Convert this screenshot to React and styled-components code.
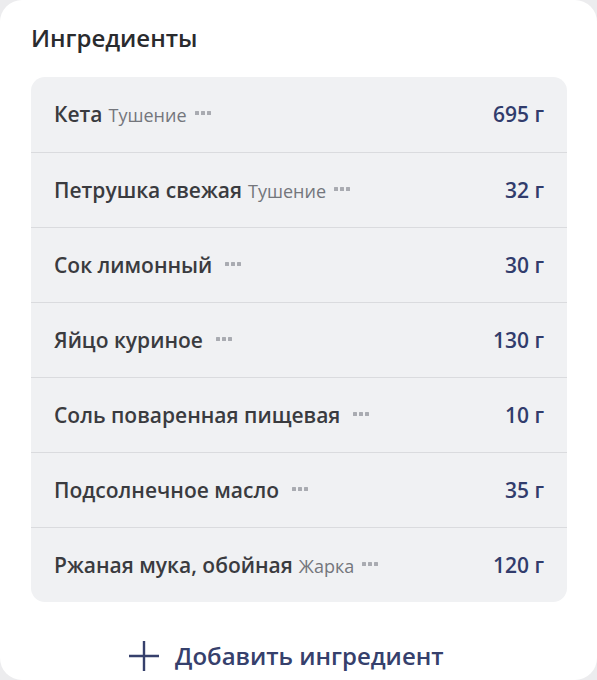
import React from "react";
import styled, { createGlobalStyle } from "styled-components";

const GlobalStyle = createGlobalStyle`
  html, body {
    margin: 0;
    padding: 0;
    background: #ececee;
  }
  body {
    font-family: "Open Sans", "Noto Sans", "Liberation Sans", sans-serif;
  }
`;

const Card = styled.div`
  background: #ffffff;
  border-radius: 22px;
  min-height: 680px;
  box-sizing: border-box;
  padding: 22px 30px 0 31px;
`;

const Title = styled.h2`
  margin: 0 0 23px;
  font-size: 24px;
  font-weight: 600;
  color: #2a2b2e;
  line-height: 32px;
`;

const Panel = styled.div`
  background: #f0f1f3;
  border-radius: 14px;
  overflow: hidden;
`;

const Row = styled.div`
  display: flex;
  align-items: center;
  justify-content: space-between;
  box-sizing: border-box;
  height: 75px;
  padding: 0 23px 1px;
  border-top: ${(p) => (p.$first ? "none" : "1px solid #dadbde")};
`;

const NameWrap = styled.div`
  display: flex;
  align-items: baseline;
  white-space: nowrap;
`;

const Name = styled.span`
  font-size: 21px;
  font-weight: 600;
  color: #3a3b3f;
`;

const Method = styled.span`
  margin-left: 6px;
  font-size: 18px;
  font-weight: 500;
  color: #74767c;
`;

const Dots = styled.span`
  display: inline-flex;
  gap: 2px;
  margin-left: ${(p) => (p.$wide ? "13px" : "8px")};
  align-self: center;
  position: relative;
  top: -1px;

  i {
    width: 4px;
    height: 4px;
    background: #a9abb1;
    border-radius: 0.5px;
  }
`;

const Amount = styled.span`
  font-size: 21px;
  font-weight: 600;
  color: #313c6c;
`;

const AddButton = styled.button`
  display: flex;
  align-items: center;
  gap: 15px;
  margin: 37px 0 0 97px;
  background: none;
  border: none;
  padding: 0;
  font-family: inherit;
  font-size: 24px;
  line-height: 33px;
  font-weight: 600;
  color: #36406c;
  cursor: pointer;
`;

const items = [
  { name: "Кета", method: "Тушение", amount: "695 г" },
  { name: "Петрушка свежая", method: "Тушение", amount: "32 г" },
  { name: "Сок лимонный", amount: "30 г" },
  { name: "Яйцо куриное", amount: "130 г" },
  { name: "Соль поваренная пищевая", amount: "10 г" },
  { name: "Подсолнечное масло", amount: "35 г" },
  { name: "Ржаная мука, обойная", method: "Жарка", amount: "120 г" },
];

const PlusIcon = () => (
  <svg width="32" height="32" viewBox="0 0 32 32" fill="none">
    <path d="M16 1v30M1 16h30" stroke="#36406c" strokeWidth="2.4" />
  </svg>
);

export default function App() {
  return (
    <>
      <GlobalStyle />
      <Card>
        <Title>Ингредиенты</Title>
        <Panel>
          {items.map((it, i) => (
            <Row key={it.name} $first={i === 0}>
              <NameWrap>
                <Name>{it.name}</Name>
                {it.method && <Method>{it.method}</Method>}
                <Dots $wide={!it.method}>
                  <i />
                  <i />
                  <i />
                </Dots>
              </NameWrap>
              <Amount>{it.amount}</Amount>
            </Row>
          ))}
        </Panel>
        <AddButton>
          <PlusIcon />
          Добавить ингредиент
        </AddButton>
      </Card>
    </>
  );
}
